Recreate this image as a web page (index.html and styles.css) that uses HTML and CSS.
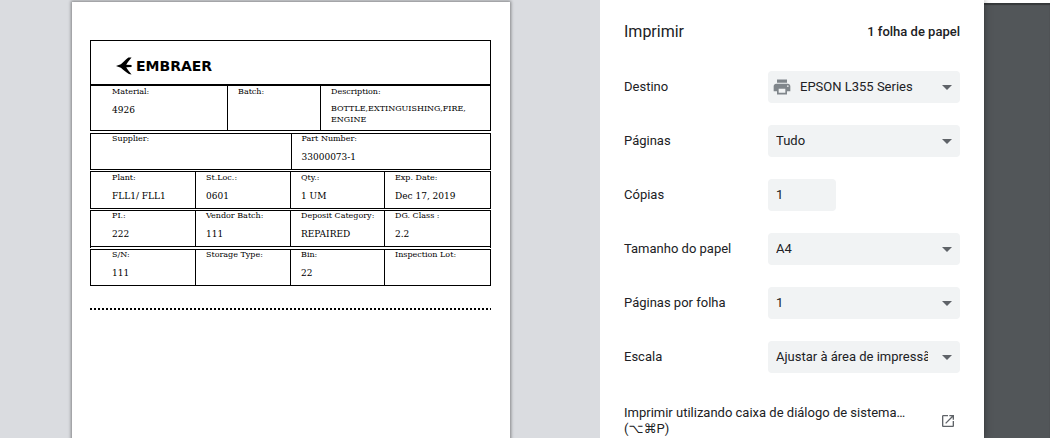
FILE: index.html
```html
<!DOCTYPE html>
<html lang="pt">
<head>
<meta charset="utf-8">
<title>Imprimir</title>
<link rel="stylesheet" href="styles.css">
</head>
<body>
<div class="window">
  <main class="preview">
    <article class="sheet">
      <header class="brand">
        <svg class="brand-mark" viewBox="0 0 36 38" aria-hidden="true"><path d="M0 19 L11 15 C17 10 22 4 28 0 L35 0 C30 6 26 11 23 16 L35 17 L35 21 L23 22 C26 27 30 32 35 38 L29 37 C22 33 17 28 11 23 Z"/></svg>
        <span class="brand-name">EMBRAER</span>
      </header>
      <dl class="row row-material">
        <div class="cell"><dt>Material:</dt><dd>4926</dd></div>
        <div class="cell"><dt>Batch:</dt></div>
        <div class="cell"><dt>Description:</dt><dd class="long">BOTTLE,EXTINGUISHING,FIRE, ENGINE</dd></div>
      </dl>
      <dl class="row row-supplier">
        <div class="cell"><dt>Supplier:</dt></div>
        <div class="cell"><dt>Part Number:</dt><dd>33000073-1</dd></div>
      </dl>
      <dl class="row row-plant">
        <div class="cell"><dt>Plant:</dt><dd>FLL1/ FLL1</dd></div>
        <div class="cell"><dt>St.Loc.:</dt><dd>0601</dd></div>
        <div class="cell"><dt>Qty.:</dt><dd>1 UM</dd></div>
        <div class="cell"><dt>Exp. Date:</dt><dd>Dec 17, 2019</dd></div>
      </dl>
      <dl class="row row-vendor">
        <div class="cell"><dt>PI.:</dt><dd>222</dd></div>
        <div class="cell"><dt>Vendor Batch:</dt><dd>111</dd></div>
        <div class="cell"><dt>Deposit Category:</dt><dd>REPAIRED</dd></div>
        <div class="cell"><dt>DG. Class :</dt><dd>2.2</dd></div>
      </dl>
      <dl class="row row-serial">
        <div class="cell"><dt>S/N:</dt><dd>111</dd></div>
        <div class="cell"><dt>Storage Type:</dt></div>
        <div class="cell"><dt>Bin:</dt><dd>22</dd></div>
        <div class="cell"><dt>Inspection Lot:</dt></div>
      </dl>
      <hr class="cut-line">
    </article>
  </main>
  <aside class="panel">
    <header class="panel-head">
      <h1>Imprimir</h1>
      <span class="sheets">1 folha de papel</span>
    </header>
    <form class="settings">
      <label for="destination">Destino</label>
      <div class="control">
        <svg class="printer" viewBox="0 0 24 24" aria-hidden="true"><path d="M19 8H5c-1.660 0-3 1.340-3 3v6h4v4h12v-4h4v-6c0-1.660-1.340-3-3-3zm-3 11H8v-5h8v5zm3-7c-.55 0-1-.45-1-1s.45-1 1-1 1 .45 1 1-.45 1-1 1zm-1-9H6v4h12V3z"/></svg>
        <select id="destination" class="field with-icon"><option>EPSON L355 Series</option></select>
      </div>
      <label for="pages">Páginas</label>
      <div class="control"><select id="pages" class="field"><option>Tudo</option></select></div>
      <label for="copies">Cópias</label>
      <div class="control plain"><input id="copies" class="field copies" type="text" inputmode="numeric" value="1"></div>
      <label for="paper">Tamanho do papel</label>
      <div class="control"><select id="paper" class="field"><option>A4</option></select></div>
      <label for="per-sheet">Páginas por folha</label>
      <div class="control"><select id="per-sheet" class="field"><option>1</option></select></div>
      <label for="scale">Escala</label>
      <div class="control"><select id="scale" class="field"><option>Ajustar à área de impressão</option></select></div>
    </form>
    <button class="system-dialog" type="button">
      <span>Imprimir utilizando caixa de diálogo de sistema… (⌥⌘P)</span>
      <svg class="open-icon" viewBox="0 0 24 24" aria-hidden="true"><path d="M19 19H5V5h7V3H5c-1.110 0-2 .9-2 2v14c0 1.100.89 2 2 2h14c1.100 0 2-.9 2-2v-7h-2v7zM14 3v2h3.590l-9.830 9.830 1.410 1.410L19 6.410V10h2V3h-7z"/></svg>
    </button>
  </aside>
  <div class="backdrop"></div>
</div>
</body>
</html>
```

FILE: styles.css
```css
* { box-sizing: border-box; }

body {
  margin: 0;
  color: #202124;
  font-family: Roboto, "DejaVu Sans", sans-serif;
  font-size: 13px;
}

.window {
  display: grid;
  grid-template-columns: 600fr 384fr 66fr;
  grid-template-rows: 100%;
  height: 100vh;
  overflow: hidden;
}

/* Print preview */
.preview {
  min-width: 0;
  padding: 2px 90px 0 72px;
  background: #dadce0;
}

.sheet {
  height: 150vh;
  padding: 38px 19px 0 18px;
  background: #fff;
  box-shadow: 0 0 3px 1px rgba(0, 0, 0, 0.4);
  color: #000;
  font-family: "DejaVu Serif", serif;
}

.brand {
  display: flex;
  align-items: center;
  gap: 4px;
  height: 44px;
  padding: 6px 0 0 25px;
  border: 1px solid #000;
  border-bottom: 0;
}

.brand-mark { width: 16px; height: 18px; }

.brand-name {
  font: bold 14px/18px "DejaVu Sans", sans-serif;
}

.row {
  display: grid;
  min-height: 37px;
  margin: 1px 0 0;
  border: 1px solid #000;
}

.row-material {
  grid-template-columns: 136fr 93fr 170fr;
  min-height: 47px;
  margin: 0;
  border-top-width: 2px;
}

.row-supplier {
  grid-template-columns: 1fr 1fr;
  margin-top: 2px;
}

.row-plant,
.row-vendor,
.row-serial {
  grid-template-columns: 104fr 95fr 94fr 106fr;
}

.row-plant { min-height: 38px; }

.row-vendor {
  min-height: 40px;
  border-bottom: 4px double #000;
}

.row-serial {
  min-height: 36px;
  margin: 0;
  border-top: 0;
}

.cell {
  min-width: 0;
  padding-left: 10px;
  border-left: 1px solid #000;
}

.cell:first-child {
  padding-left: 21px;
  border-left: 0;
}

.row-material .cell,
.row-plant .cell {
  padding-top: 1px;
}

dt {
  font-size: 8px;
  line-height: 10px;
  white-space: nowrap;
}

dd {
  margin: 6px 0 0;
  font-size: 9px;
  line-height: 14px;
  white-space: nowrap;
}

.long {
  padding-right: 20px;
  font-size: 8px;
  line-height: 11px;
  white-space: normal;
}

.cut-line {
  height: 2px;
  margin: 22px 0 0;
  border: 0;
  background: repeating-linear-gradient(90deg, #000 0 2px, #fff 2px 4px);
}

/* Settings panel */
.panel {
  z-index: 1;
  min-width: 0;
  padding: 0 24px;
  background: #fff;
  box-shadow: 0 0 8px rgba(0, 0, 0, 0.4);
  clip-path: inset(0 -12px 0 0);
}

.panel-head {
  display: flex;
  align-items: center;
  justify-content: space-between;
  height: 63px;
  margin-bottom: 8px;
}

h1 {
  margin: 0;
  font-size: 16px;
  font-weight: 400;
}

.sheets { font-weight: 500; }

.settings {
  display: grid;
  grid-template-columns: 3fr 4fr;
  align-items: center;
  row-gap: 22px;
}

label { padding-bottom: 2px; }

.control {
  position: relative;
  min-width: 0;
}

.control::after {
  content: "";
  position: absolute;
  top: 14px;
  right: 8px;
  border: 5px solid transparent;
  border-top-color: #5f6368;
  border-bottom: 0;
  pointer-events: none;
}

.plain::after { content: none; }

.field {
  display: block;
  width: 100%;
  height: 32px;
  padding: 0 32px 2px 8px;
  border: 0;
  border-radius: 4px;
  background: #f1f3f4;
  color: #202124;
  font: inherit;
  appearance: none;
}

.with-icon { padding-left: 32px; }

.copies {
  width: 68px;
  padding-right: 8px;
}

.printer {
  position: absolute;
  top: 6px;
  left: 4px;
  width: 20px;
  height: 20px;
  fill: #80868b;
}

.system-dialog {
  display: flex;
  align-items: center;
  justify-content: space-between;
  gap: 24px;
  width: 100%;
  margin-top: 32px;
  padding: 0 4px 0 0;
  border: 0;
  background: none;
  color: inherit;
  font: inherit;
  line-height: 16px;
  text-align: left;
}

.open-icon {
  flex: none;
  width: 16px;
  height: 16px;
  fill: #5f6368;
}

.backdrop {
  border-top: 3px solid #fff;
  background: #525659;
  box-shadow: inset 0 2px 1px rgba(0, 0, 0, 0.35);
}
```
